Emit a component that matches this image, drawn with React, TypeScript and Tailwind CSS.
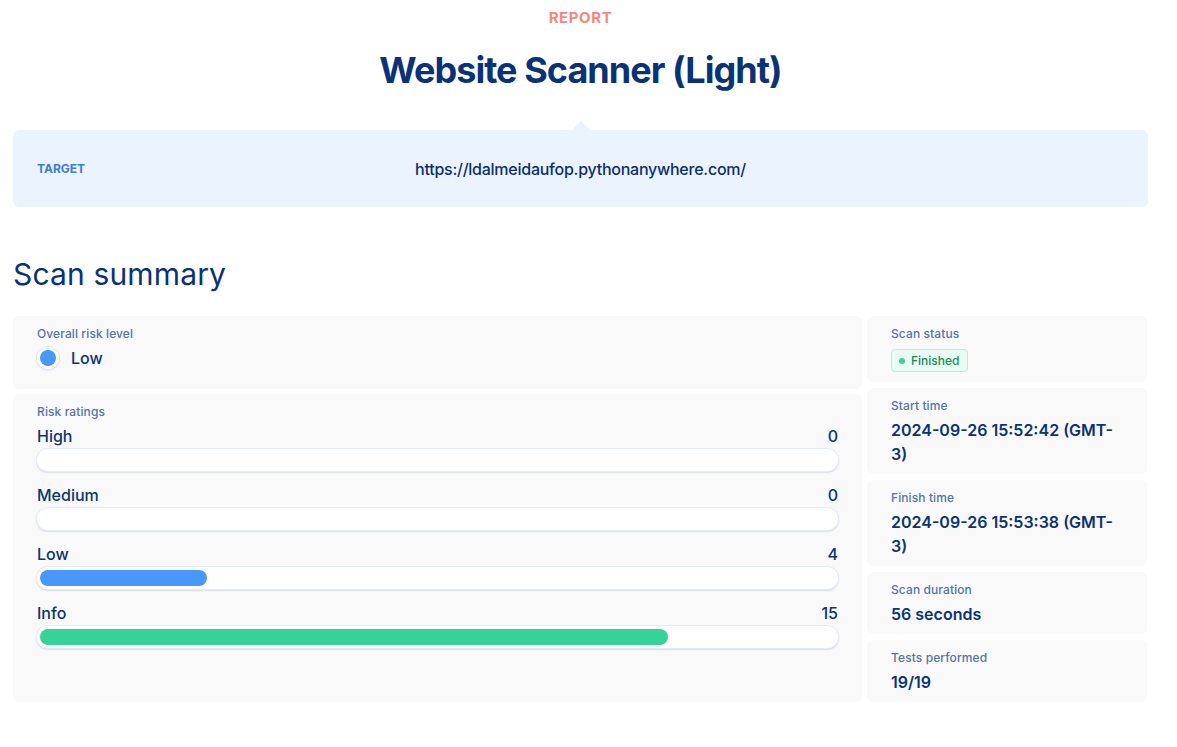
import React from "react";

const ratings = [
  { label: "High", count: 0, color: "bg-[#e5484d]" },
  { label: "Medium", count: 0, color: "bg-[#f5a623]" },
  { label: "Low", count: 4, color: "bg-[#4699fa]" },
  { label: "Info", count: 15, color: "bg-[#35d399]" },
];
const total = 19;

function Label({ children }: { children: React.ReactNode }) {
  return <div className="text-[12px] font-medium leading-4 tracking-[0.1px] text-[#5873a3]">{children}</div>;
}

function InfoCard({ label, children, h }: { label: string; children: React.ReactNode; h: string }) {
  return (
    <div className={`rounded-md bg-[#f9f9fa] px-6 pt-[10px] ${h}`}>
      <Label>{label}</Label>
      <div className="mt-1 text-[16px] font-semibold leading-6 text-[#0b3372]">{children}</div>
    </div>
  );
}

export default function App() {
  return (
    <div className="min-h-[747px] bg-white px-[13px] font-['Inter',sans-serif]">
      <div className="w-[1135px]">
        <header className="flex flex-col items-center">
          <div className="mt-[8px] text-[15px] font-bold leading-5 tracking-[0.6px] text-[#f7877a]">REPORT</div>
          <h1 className="mt-[20px] text-[36px] font-bold leading-[44px] tracking-[-0.95px] text-[#0a3277]">
            Website Scanner (Light)
          </h1>
        </header>

        <div className="relative mt-[38px] flex h-[77px] items-center rounded-md bg-[#ebf3fe] px-6">
          <div className="absolute -top-[9px] left-1/2 h-0 w-0 -translate-x-1/2 border-x-[9px] border-b-[9px] border-x-transparent border-b-[#ebf3fe]" />
          <div className="absolute left-6 text-[12px] font-bold uppercase text-[#3a7fd6]">Target</div>
          <div className="w-full text-center text-[16px] font-medium tracking-[-0.25px] text-[#0c2e6e]">
            https://ldalmeidaufop.pythonanywhere.com/
          </div>
        </div>

        <h2 className="mt-[49px] text-[30px] font-normal leading-[36px] tracking-[0.15px] text-[#0a3277]">Scan summary</h2>

        <div className="mt-[24px] flex gap-[5px]">
          <div className="flex w-[849px] flex-col gap-[5px]">
            <div className="h-[73px] rounded-md bg-[#f9f9fa] px-6 pt-[10px]">
              <Label>Overall risk level</Label>
              <div className="mt-[4px] flex items-center gap-[12px]">
                <div className="grid size-[22px] place-items-center rounded-full bg-white shadow-[0_0_0_1px_#dfe8f6,0_1px_2px_rgba(60,100,170,0.25)]">
                  <div className="size-[16px] rounded-full bg-[#4699fa]" />
                </div>
                <span className="text-[16px] font-medium leading-6 text-[#0b3372]">Low</span>
              </div>
            </div>

            <div className="flex-1 rounded-md bg-[#f9f9fa] px-6 pt-[10px]">
              <Label>Risk ratings</Label>
              <div className="mt-[4px] flex flex-col gap-[12px]">
                {ratings.map((r) => (
                  <div key={r.label}>
                    <div className="flex justify-between text-[16px] font-medium leading-6 text-[#0b3372]">
                      <span>{r.label}</span>
                      <span>{r.count}</span>
                    </div>
                    <div className="mt-[1px] h-[22px] rounded-full bg-white p-[3px] shadow-[0_0_0_1px_#e6ecf5,0_1px_2px_rgba(58,88,150,0.5)]">
                      {r.count > 0 && (
                        <div
                          className={`h-full rounded-full ${r.color}`}
                          style={{ width: `${(r.count / total) * 100}%` }}
                        />
                      )}
                    </div>
                  </div>
                ))}
              </div>
            </div>
          </div>

          <div className="flex w-[280px] flex-col gap-[6px]">
            <div className="h-[66px] rounded-md bg-[#f9f9fa] px-6 pt-[10px]">
              <Label>Scan status</Label>
              <div className="mt-[7px] inline-flex h-[23px] items-center gap-[6px] rounded-[4px] border border-[#bdebd6] bg-[#e9fbf3] px-[7px] text-[12px] font-medium text-[#1b8a5b]">
                <span className="size-[6px] rounded-full bg-[#3ad29a]" />
                Finished
              </div>
            </div>
            <InfoCard label="Start time" h="h-[86px]">
              2024-09-26 15:52:42 (GMT-
              <br />
              3)
            </InfoCard>
            <InfoCard label="Finish time" h="h-[86px]">
              2024-09-26 15:53:38 (GMT-
              <br />
              3)
            </InfoCard>
            <InfoCard label="Scan duration" h="h-[62px]">
              56 seconds
            </InfoCard>
            <InfoCard label="Tests performed" h="h-[62px]">
              19/19
            </InfoCard>
          </div>
        </div>
      </div>
    </div>
  );
}
